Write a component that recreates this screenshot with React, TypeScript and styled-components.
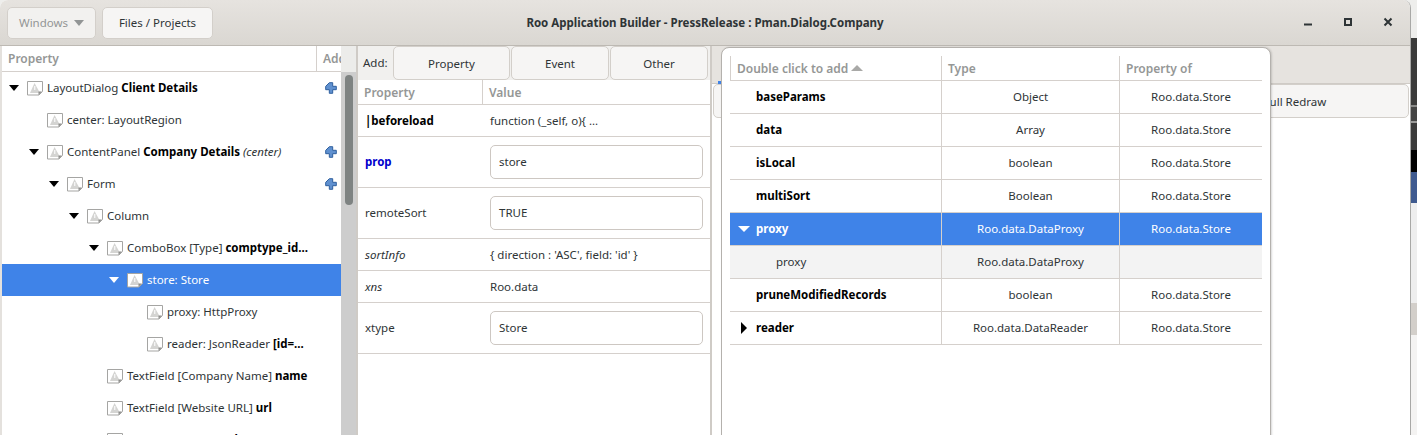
import React from "react";
import styled, { createGlobalStyle } from "styled-components";

const GlobalStyle = createGlobalStyle`
  html, body { margin: 0; padding: 0; background: #fff; }
  body { font-family: "Noto Sans", "Open Sans", sans-serif; font-size: 11.5px; color: #2e3436; }
  * { box-sizing: border-box; }
`;

type TreeRow = { level: number; arrow?: boolean; label: string; bold?: string; em?: string; plus?: boolean; selected?: boolean };

const treeRows: TreeRow[] = [
  { level: 0, arrow: true, label: "LayoutDialog ", bold: "Client Details", plus: true },
  { level: 1, label: "center: LayoutRegion" },
  { level: 1, arrow: true, label: "ContentPanel ", bold: "Company Details", em: " (center)", plus: true },
  { level: 2, arrow: true, label: "Form", plus: true },
  { level: 3, arrow: true, label: "Column" },
  { level: 4, arrow: true, label: "ComboBox [Type] ", bold: "comptype_id..." },
  { level: 5, arrow: true, label: "store: Store", selected: true },
  { level: 6, label: "proxy: HttpProxy" },
  { level: 6, label: "reader: JsonReader ", bold: "[id=..." },
  { level: 4, label: "TextField [Company Name] ", bold: "name" },
  { level: 4, label: "TextField [Website URL] ", bold: "url" },
  { level: 4, label: "TextField [Phone] ", bold: "tel" },
];

type PropRow = { name: string; kind?: "bold" | "blue" | "em"; value: string; input?: boolean };

const propRows: PropRow[] = [
  { name: "|beforeload", kind: "bold", value: "function (_self, o){ ..." },
  { name: "prop", kind: "blue", value: "store", input: true },
  { name: "remoteSort", value: "TRUE", input: true },
  { name: "sortInfo", kind: "em", value: "{ direction : 'ASC', field: 'id' }" },
  { name: "xns", kind: "em", value: "Roo.data" },
  { name: "xtype", value: "Store", input: true },
];

type AddRow = { name: string; type: string; owner: string; arrow?: "down" | "right"; selected?: boolean; child?: boolean };

const addRows: AddRow[] = [
  { name: "baseParams", type: "Object", owner: "Roo.data.Store" },
  { name: "data", type: "Array", owner: "Roo.data.Store" },
  { name: "isLocal", type: "boolean", owner: "Roo.data.Store" },
  { name: "multiSort", type: "Boolean", owner: "Roo.data.Store" },
  { name: "proxy", type: "Roo.data.DataProxy", owner: "Roo.data.Store", arrow: "down", selected: true },
  { name: "proxy", type: "Roo.data.DataProxy", owner: "", child: true },
  { name: "pruneModifiedRecords", type: "boolean", owner: "Roo.data.Store" },
  { name: "reader", type: "Roo.data.DataReader", owner: "Roo.data.Store", arrow: "right" },
];

const desktopBands: [number, string][] = [
  [38, "#eeeeec"],
  [67, "#3b3b3a"],
  [2, "#8a8a88"],
  [14, "#444443"],
  [2, "#9a9a98"],
  [27, "#3b3b3a"],
  [22, "#000000"],
  [31, "#3f5a8f"],
  [100, "#eeeeee"],
  [32, "#d3cfca"],
  [100, "#f4f3f2"],
];

function MissingIcon() {
  return (
    <IconSvg width="16" height="16" viewBox="0 0 16 16">
      <path d="M.5 1.5h15v10l-3.500 3.500H.5z" fill="#fff" stroke="#a5a5a3" />
      <path d="M7.500 3 3 13h10z" fill="#d4d4d2" />
      <path d="M7 6h1.400v4H7z" fill="#f4f4f4" />
      <path d="M11.500 15v-3.500H15z" fill="#8d8d8b" />
    </IconSvg>
  );
}

function PlusIcon() {
  return (
    <PlusSvg width="12" height="12" viewBox="0 0 12 12">
      <path d="M4.300.7h3.400v3.600h3.600v3.400H7.700v3.600H4.300V7.700H.7V4.300z" fill="#5f90cf" stroke="#2f5f9e" />
    </PlusSvg>
  );
}

export default function App() {
  return (
    <Page>
      <GlobalStyle />
      <Window>
        <TitleBar>
          <TitleLeft>
            <HeaderButton $width={89} $disabled>
              Windows
              <DownCaret />
            </HeaderButton>
            <HeaderButton $width={111}>Files / Projects</HeaderButton>
          </TitleLeft>
          <Title>Roo Application Builder - PressRelease : Pman.Dialog.Company</Title>
          <WindowControls>
            <svg width="10" height="10" viewBox="0 0 10 10">
              <path d="M1 7.500h8" stroke="#2e3436" strokeWidth="2" />
            </svg>
            <svg width="10" height="10" viewBox="0 0 10 10">
              <path d="M2 2h6v6h-6z" fill="none" stroke="#2e3436" strokeWidth="2" />
            </svg>
            <svg width="10" height="10" viewBox="0 0 10 10">
              <path d="M1.500 1.500l7 7M8.500 1.500l-7 7" stroke="#2e3436" strokeWidth="2" />
            </svg>
          </WindowControls>
        </TitleBar>

        <Body>
          <TreePanel>
            <TreeMain>
              <TreeHeader>
                <HeaderCell $width={315}>Property</HeaderCell>
                <HeaderCell $width={24} $last>Add</HeaderCell>
              </TreeHeader>
              {treeRows.map((row, i) => (
                <TreeItem key={i} $selected={row.selected} $level={row.level}>
                  <ArrowSlot>{row.arrow && <DownCaret $color={row.selected ? "#fff" : "#000"} />}</ArrowSlot>
                  <MissingIcon />
                  <TreeLabel>
                    {row.label}
                    {row.bold && <b>{row.bold}</b>}
                    {row.em && <i>{row.em}</i>}
                  </TreeLabel>
                  {row.plus && <PlusIcon />}
                </TreeItem>
              ))}
            </TreeMain>
            <ScrollTrack>
              <ScrollThumb />
            </ScrollTrack>
          </TreePanel>

          <PropsPanel>
            <AddBar>
              <AddLabel>Add:</AddLabel>
              <AddButton $width={117}>Property</AddButton>
              <AddButton $width={98}>Event</AddButton>
              <AddButton $width={98}>Other</AddButton>
            </AddBar>
            <PropsHeader>
              <HeaderCell $width={125}>Property</HeaderCell>
              <HeaderCell $last>Value</HeaderCell>
            </PropsHeader>
            {propRows.map((row) => (
              <PropItem key={row.name} $tall={row.input}>
                <PropName $kind={row.kind} $tall={row.input}>{row.name}</PropName>
                {row.input ? <ValueBox>{row.value}</ValueBox> : <PropValue>{row.value}</PropValue>}
              </PropItem>
            ))}
          </PropsPanel>

          <PreviewPanel>
            <TabStrip>
              <ActiveTabMark />
            </TabStrip>
            <PreviewBar>
              <PreviewButton $width={120} />
              <PreviewButton $width={228}>Full Redraw</PreviewButton>
            </PreviewBar>
          </PreviewPanel>

          <Popover>
            <AddHeader>
              <AddHeaderCell $width={212} $first>
                Double click to add
                <UpCaret />
              </AddHeaderCell>
              <AddHeaderCell $width={178}>Type</AddHeaderCell>
              <AddHeaderCell $width={142} $last>Property of</AddHeaderCell>
            </AddHeader>
            {addRows.map((row, i) => (
              <AddItem key={i} $selected={row.selected} $child={row.child}>
                <AddNameCell $child={row.child}>
                  {row.arrow === "down" && <AddDown />}
                  {row.arrow === "right" && <AddRight />}
                  {row.name}
                </AddNameCell>
                <AddCell $width={178}>{row.type}</AddCell>
                <AddCell $width={142} $last>{row.owner}</AddCell>
              </AddItem>
            ))}
          </Popover>
        </Body>
      </Window>

      <DesktopStrip>
        {desktopBands.map(([height, color], i) => (
          <div key={i} style={{ height, background: color }} />
        ))}
      </DesktopStrip>
    </Page>
  );
}

const Page = styled.div`
  display: flex;
  width: 1417px;
  height: 435px;
  overflow: hidden;
  background: #eeeeec;
`;

const Window = styled.div`
  width: 1411px;
  height: 435px;
  display: flex;
  flex-direction: column;
  border-radius: 8px 8px 0 0;
  border-right: 1px solid #a8a8a6;
  overflow: hidden;
  background: #fff;
`;

const TitleBar = styled.div`
  height: 46px;
  flex: none;
  display: grid;
  grid-template-columns: 1fr auto 1fr;
  align-items: center;
  background: linear-gradient(#e6e3df, #dad7d2);
  border-bottom: 1px solid #bdb9b3;
`;

const TitleLeft = styled.div`
  display: flex;
  gap: 6px;
  padding-left: 7px;
`;

const HeaderButton = styled.div<{ $width: number; $disabled?: boolean }>`
  width: ${(p) => p.$width}px;
  height: 32px;
  display: flex;
  align-items: center;
  justify-content: center;
  gap: 6px;
  border-radius: 5px;
  border: 1px solid #d3cfca;
  background: ${(p) => (p.$disabled ? "#f2f1ef" : "#f6f5f4")};
  color: ${(p) => (p.$disabled ? "#929595" : "#2e3436")};
`;

const DownCaret = styled.span<{ $color?: string }>`
  display: inline-block;
  width: 0;
  height: 0;
  border-left: 5.5px solid transparent;
  border-right: 5.5px solid transparent;
  border-top: 6px solid ${(p) => p.$color || "#929595"};
`;

const UpCaret = styled.span`
  display: inline-block;
  width: 0;
  height: 0;
  margin-left: 3px;
  border-left: 6px solid transparent;
  border-right: 6px solid transparent;
  border-bottom: 6px solid #a9a9a7;
`;

const Title = styled.div`
  font-weight: 700;
  color: #2e3436;
`;

const WindowControls = styled.div`
  display: flex;
  justify-content: flex-end;
  gap: 30px;
  padding-right: 17px;
  margin-top: -1px;
`;

const Body = styled.div`
  position: relative;
  flex: 1;
  display: flex;
  min-height: 0;
`;

const TreePanel = styled.div`
  width: 358px;
  flex: none;
  display: flex;
  padding-left: 2px;
  background: #e4e1dd;
  border-right: 2px solid #cfcbc6;
`;

const TreeMain = styled.div`
  width: 339px;
  flex: none;
  background: #fff;
  overflow: hidden;
`;

const TreeHeader = styled.div`
  display: flex;
  height: 26px;
  border-bottom: 1px solid #d5d0cc;
`;

const HeaderCell = styled.div<{ $width?: number; $last?: boolean }>`
  ${(p) => (p.$width ? `width: ${p.$width}px;` : "flex: 1;")}
  flex-shrink: 0;
  padding-left: 6px;
  line-height: 25px;
  font-size: 12px;
  font-weight: 600;
  color: #959796;
  overflow: hidden;
  white-space: nowrap;
  border-right: ${(p) => (p.$last ? "none" : "1px solid #d5d0cc")};
`;

const TreeItem = styled.div<{ $selected?: boolean; $level: number }>`
  height: 32px;
  display: flex;
  align-items: center;
  padding-left: ${(p) => p.$level * 20 + 7}px;
  padding-right: 4px;
  white-space: nowrap;
  background: ${(p) => (p.$selected ? "#3f83e8" : "#fff")};
  color: ${(p) => (p.$selected ? "#fff" : "#2e3436")};
  b { color: #000; font-weight: 700; }
`;

const ArrowSlot = styled.span`
  width: 18px;
  flex: none;
  display: flex;
`;

const IconSvg = styled.svg`
  flex: none;
`;

const TreeLabel = styled.span`
  flex: 1;
  padding: 0 0 2px 4px;
`;

const PlusSvg = styled.svg`
  flex: none;
`;

const ScrollTrack = styled.div`
  width: 15px;
  flex: none;
  background: linear-gradient(#ececea 26px, #cdcdcd 26px);
  padding: 29px 3px 0 4px;
`;

const ScrollThumb = styled.div`
  height: 130px;
  border-radius: 4px;
  background: #7e8382;
`;

const PropsPanel = styled.div`
  width: 354px;
  flex: none;
  background: #fff;
  border-right: 2px solid #cfcbc6;
`;

const AddBar = styled.div`
  height: 34px;
  display: flex;
  gap: 1px;
  background: #f1f0ee;
  padding-left: 5px;
`;

const AddLabel = styled.div`
  width: 29px;
  line-height: 34px;
`;

const AddButton = styled.div<{ $width: number }>`
  width: ${(p) => p.$width}px;
  display: flex;
  align-items: center;
  justify-content: center;
  border: 1px solid #d3cfca;
  border-radius: 5px;
  background: #f6f5f4;
`;

const PropsHeader = styled.div`
  display: flex;
  height: 25px;
  border-bottom: 1px solid #d5d0cc;
`;

const PropItem = styled.div<{ $tall?: boolean }>`
  height: ${(p) => (p.$tall ? 51 : 32)}px;
  display: flex;
  align-items: center;
  border-bottom: 1px solid #d5d0cc;
  padding: 0 7px;
`;

const PropName = styled.div<{ $kind?: "bold" | "blue" | "em"; $tall?: boolean }>`
  width: 125px;
  flex: none;
  padding-bottom: ${(p) => (p.$tall ? 2 : 0)}px;
  font-weight: ${(p) => (p.$kind === "bold" || p.$kind === "blue" ? 700 : 400)};
  font-style: ${(p) => (p.$kind === "em" ? "italic" : "normal")};
  color: ${(p) => (p.$kind === "blue" ? "#0000cc" : p.$kind === "bold" ? "#000" : "#2e3436")};
`;

const PropValue = styled.div`
  flex: 1;
`;

const ValueBox = styled.div`
  width: 213px;
  height: 34px;
  display: flex;
  align-items: center;
  padding: 0 0 2px 8px;
  border: 1px solid #cdc7c2;
  border-radius: 5px;
  background: #fff;
`;

const PreviewPanel = styled.div`
  flex: 1;
  min-width: 0;
  background: #fff;
`;

const TabStrip = styled.div`
  position: relative;
  height: 38px;
  background: #e6e3df;
  border-bottom: 1px solid #cfcbc6;
`;

const ActiveTabMark = styled.div`
  position: absolute;
  left: 6px;
  bottom: -1px;
  width: 30px;
  height: 3px;
  background: #3f83e8;
`;

const PreviewBar = styled.div`
  display: flex;
  justify-content: space-between;
  padding: 0 1px;
`;

const PreviewButton = styled.div<{ $width: number }>`
  width: ${(p) => p.$width}px;
  height: 34px;
  display: flex;
  align-items: center;
  justify-content: center;
  border: 1px solid #d3cfca;
  border-radius: 5px;
  background: #f6f5f4;
`;

const Popover = styled.div`
  position: absolute;
  left: 721px;
  top: 1px;
  width: 550px;
  height: 400px;
  padding: 8px 8px 0;
  background: #fff;
  border: 1px solid #b4b1ad;
  border-radius: 8px 8px 0 0;
  box-shadow: 1px 0 2px rgba(0, 0, 0, 0.15);
`;

const AddHeader = styled.div`
  display: flex;
  height: 25px;
  border-bottom: 1px solid #d5d0cc;
`;

const AddHeaderCell = styled.div<{ $width: number; $first?: boolean; $last?: boolean }>`
  width: ${(p) => p.$width}px;
  display: flex;
  align-items: center;
  padding-left: 6px;
  font-size: 12px;
  font-weight: 600;
  color: #959796;
  border-left: ${(p) => (p.$first ? "1px solid #d5d0cc" : "none")};
  border-right: ${(p) => (p.$last ? "none" : "1px solid #d5d0cc")};
`;

const AddItem = styled.div<{ $selected?: boolean; $child?: boolean }>`
  display: flex;
  height: 33px;
  border-bottom: 1px solid #d5d0cc;
  background: ${(p) => (p.$selected ? "#3f83e8" : p.$child ? "#f3f3f3" : "#fff")};
  color: ${(p) => (p.$selected ? "#fff" : "#2e3436")};
  ${(p) => (p.$selected ? "--name: #fff;" : "--name: #000;")}
`;

const AddNameCell = styled.div<{ $child?: boolean }>`
  position: relative;
  width: 212px;
  display: flex;
  align-items: center;
  padding-left: ${(p) => (p.$child ? 46 : 26)}px;
  padding-bottom: 2px;
  font-weight: ${(p) => (p.$child ? 400 : 700)};
  color: ${(p) => (p.$child ? "#2e3436" : "var(--name)")};
  border-right: 1px solid #d5d0cc;
`;

const AddDown = styled.span`
  position: absolute;
  left: 8px;
  top: 13px;
  width: 0;
  height: 0;
  border-left: 6px solid transparent;
  border-right: 6px solid transparent;
  border-top: 6px solid #fff;
`;

const AddRight = styled.span`
  position: absolute;
  left: 11px;
  top: 10px;
  width: 0;
  height: 0;
  border-top: 6px solid transparent;
  border-bottom: 6px solid transparent;
  border-left: 6px solid #000;
`;

const AddCell = styled.div<{ $width: number; $last?: boolean }>`
  width: ${(p) => p.$width}px;
  display: flex;
  align-items: center;
  justify-content: center;
  padding-bottom: 2px;
  border-right: ${(p) => (p.$last ? "none" : "1px solid #d5d0cc")};
`;

const DesktopStrip = styled.div`
  width: 6px;
  flex: none;
`;
